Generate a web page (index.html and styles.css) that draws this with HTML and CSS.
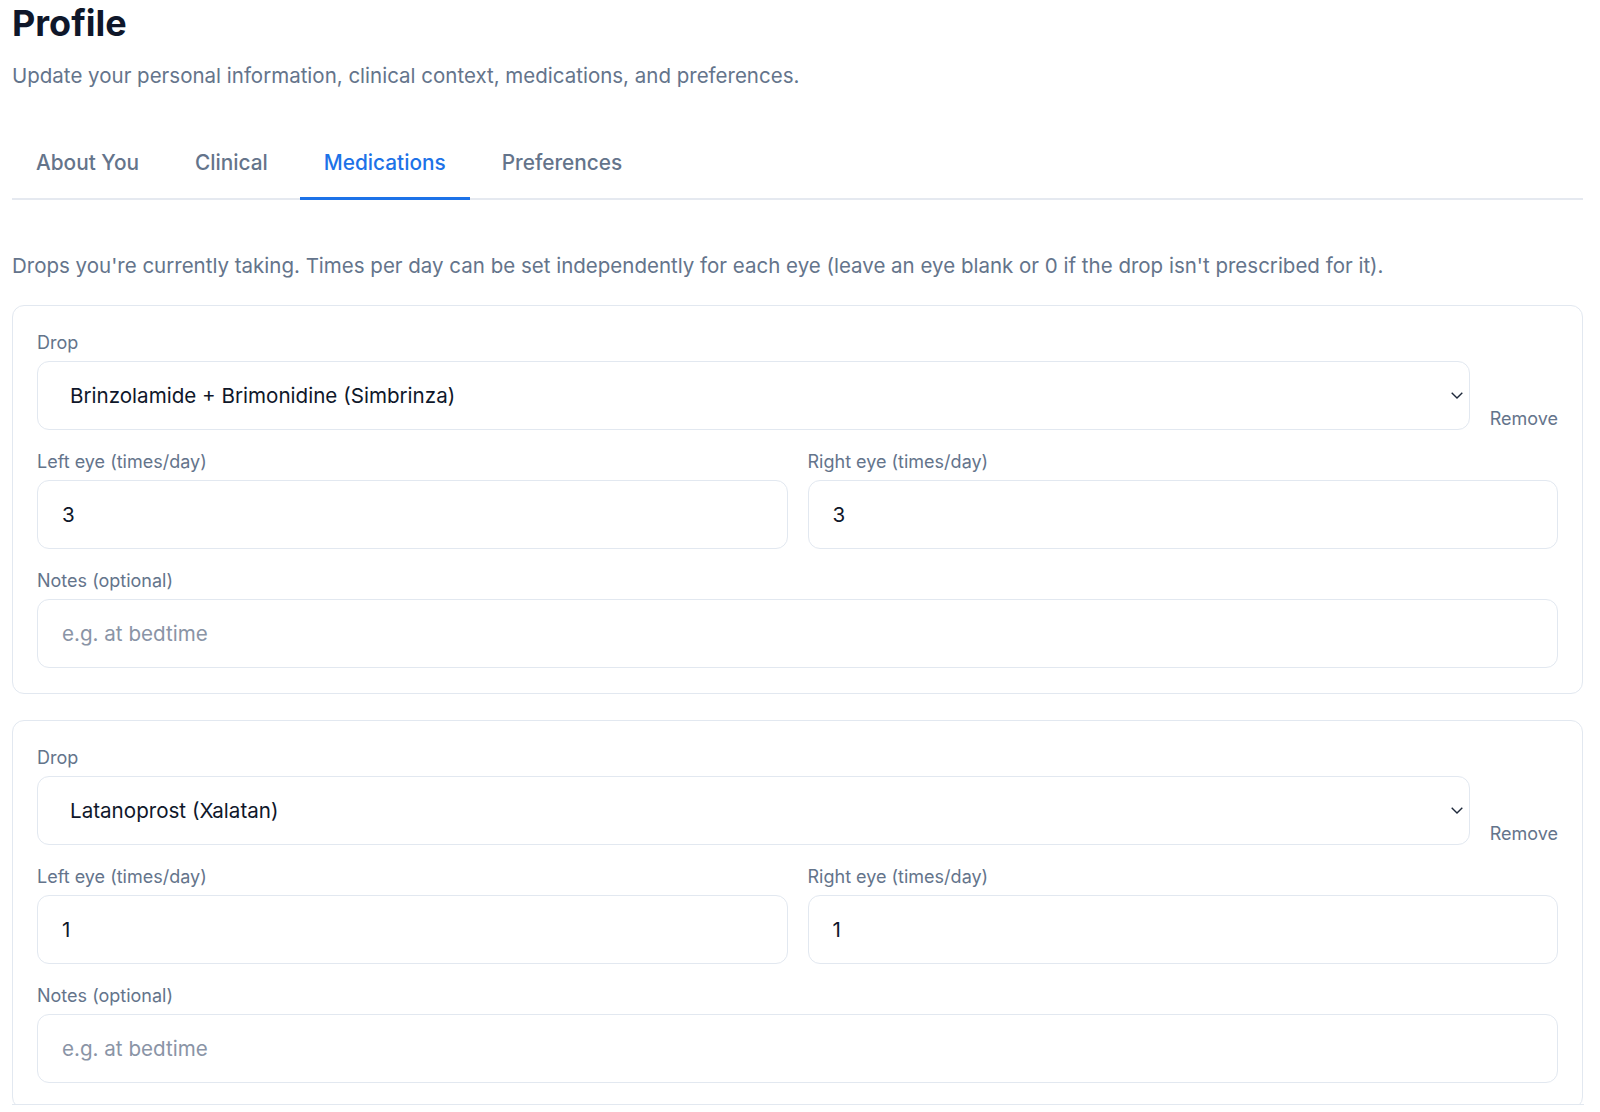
FILE: index.html
```html
<!DOCTYPE html>
<html lang="en">
<head>
<meta charset="utf-8">
<title>Profile</title>
<link rel="stylesheet" href="styles.css">
</head>
<body>
<main class="page">
  <h1 class="title">Profile</h1>
  <p class="subtitle">Update your personal information, clinical context, medications, and preferences.</p>

  <nav class="tabs">
    <button class="tab">About You</button>
    <button class="tab">Clinical</button>
    <button class="tab tab-active">Medications</button>
    <button class="tab">Preferences</button>
  </nav>

  <p class="intro">Drops you're currently taking. Times per day can be set independently for each eye (leave an eye blank or 0 if the drop isn't prescribed for it).</p>

  <section class="med-card">
    <div class="drop-row">
      <div class="field grow">
        <label class="label">Drop</label>
        <div class="select-wrap">
          <select class="select">
            <option>Brinzolamide + Brimonidine (Simbrinza)</option>
          </select>
          <svg class="chevron" width="12" height="7" viewBox="0 0 12 7"><path d="M0.7 0.7 L6 6 L11.3 0.7" fill="none" stroke="#1e293b" stroke-width="1.4"/></svg>
        </div>
      </div>
      <button class="remove">Remove</button>
    </div>
    <div class="eyes">
      <div class="field">
        <label class="label">Left eye (times/day)</label>
        <input class="input" type="text" value="3">
      </div>
      <div class="field">
        <label class="label">Right eye (times/day)</label>
        <input class="input" type="text" value="3">
      </div>
    </div>
    <div class="field">
      <label class="label">Notes (optional)</label>
      <input class="input" type="text" placeholder="e.g. at bedtime">
    </div>
  </section>

  <section class="med-card">
    <div class="drop-row">
      <div class="field grow">
        <label class="label">Drop</label>
        <div class="select-wrap">
          <select class="select">
            <option>Latanoprost (Xalatan)</option>
          </select>
          <svg class="chevron" width="12" height="7" viewBox="0 0 12 7"><path d="M0.7 0.7 L6 6 L11.3 0.7" fill="none" stroke="#1e293b" stroke-width="1.4"/></svg>
        </div>
      </div>
      <button class="remove">Remove</button>
    </div>
    <div class="eyes">
      <div class="field">
        <label class="label">Left eye (times/day)</label>
        <input class="input" type="text" value="1">
      </div>
      <div class="field">
        <label class="label">Right eye (times/day)</label>
        <input class="input" type="text" value="1">
      </div>
    </div>
    <div class="field">
      <label class="label">Notes (optional)</label>
      <input class="input" type="text" placeholder="e.g. at bedtime">
    </div>
  </section>

  <div class="sticky-bar"></div>
</main>
</body>
</html>
```

FILE: styles.css
```css
* { box-sizing: border-box; }

html, body {
  margin: 0;
  padding: 0;
  background: #ffffff;
}

body {
  font-family: Inter, "Noto Sans", "Liberation Sans", sans-serif;
  color: #0f172a;
}

.page {
  padding: 1px 17px 40px 12px;
}

.title {
  margin: 0;
  font-size: 36px;
  line-height: 44px;
  font-weight: 700;
  color: #0f172a;
}

.subtitle {
  margin: 17px 0 0;
  font-size: 20.5px;
  line-height: 28px;
  color: #64748b;
}

.tabs {
  display: flex;
  gap: 8px;
  margin-top: 41px;
  border-bottom: 2px solid #e5e9f0;
}

.tab {
  font-family: inherit;
  font-size: 20.8px;
  line-height: 28px;
  padding: 18px 24px 20px;
  border: 0;
  border-bottom: 3px solid transparent;
  margin-bottom: -2px;
  background: none;
  color: #64748b;
  font-weight: 500;
  cursor: pointer;
}

.tab-active {
  color: #1d72e8;
  border-bottom-color: #1d72e8;
}

.intro {
  margin: 52px 0 0;
  font-size: 20.5px;
  line-height: 28px;
  color: #64748b;
}

.med-card {
  margin-top: 25px;
  border: 1px solid #e2e8f0;
  border-radius: 12px;
  padding: 25px 24px 25px;
  display: flex;
  flex-direction: column;
  gap: 20px;
}

.med-card + .med-card {
  margin-top: 26px;
}

.drop-row {
  display: flex;
  align-items: flex-end;
  gap: 20px;
}

.grow { flex: 1; }

.field {
  display: flex;
  flex-direction: column;
  gap: 6px;
}

.label {
  font-size: 18px;
  line-height: 24px;
  color: #64748b;
}

.select-wrap {
  position: relative;
}

.select {
  appearance: none;
  -webkit-appearance: none;
  width: 100%;
  height: 69px;
  border: 1px solid #e2e8f0;
  border-radius: 12px;
  background: #fff;
  padding: 0 40px 0 32px;
  font-family: inherit;
  font-size: 20.6px;
  color: #0f172a;
}

.chevron {
  position: absolute;
  right: 7px;
  top: 31px;
}

.remove {
  border: 0;
  background: none;
  font-family: inherit;
  font-size: 18px;
  line-height: 22px;
  color: #64748b;
  padding: 0;
  cursor: pointer;
}

.eyes {
  display: grid;
  grid-template-columns: 1fr 1fr;
  gap: 20px;
}

.input {
  width: 100%;
  height: 69px;
  border: 1px solid #e2e8f0;
  border-radius: 12px;
  padding: 0 24px;
  font-family: inherit;
  font-size: 20.6px;
  color: #0f172a;
  background: #fff;
}

.input::placeholder {
  color: #8a94a6;
}

.sticky-bar {
  position: fixed;
  left: 12px;
  right: 16px;
  bottom: 0;
  height: 8px;
  background: #fff;
  border-top: 1px solid #e2e8f0;
}
```
